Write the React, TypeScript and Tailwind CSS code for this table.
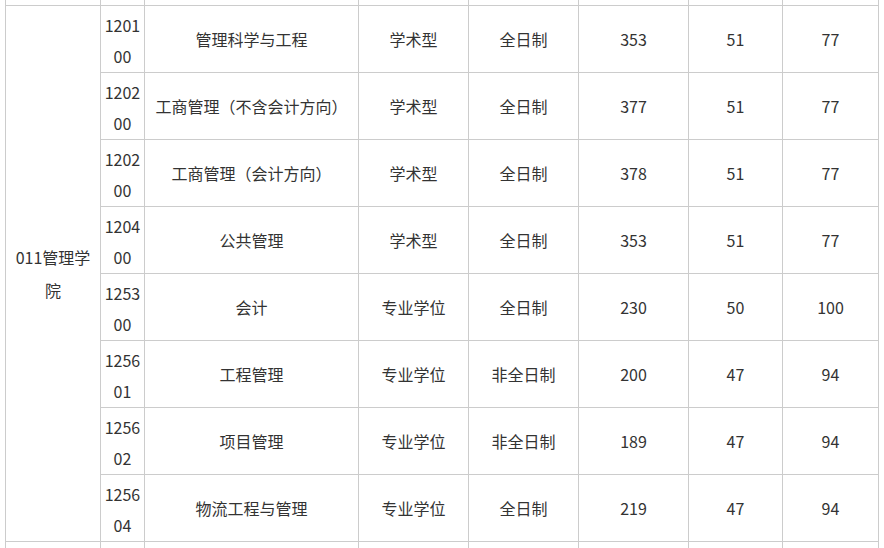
const rows = [
  ['120100', '管理科学与工程', '学术型', '全日制', '353', '51', '77'],
  ['120200', '工商管理（不含会计方向）', '学术型', '全日制', '377', '51', '77'],
  ['120200', '工商管理（会计方向）', '学术型', '全日制', '378', '51', '77'],
  ['120400', '公共管理', '学术型', '全日制', '353', '51', '77'],
  ['125300', '会计', '专业学位', '全日制', '230', '50', '100'],
  ['125601', '工程管理', '专业学位', '非全日制', '200', '47', '94'],
  ['125602', '项目管理', '专业学位', '非全日制', '189', '47', '94'],
  ['125604', '物流工程与管理', '专业学位', '全日制', '219', '47', '94'],
];

const cell = 'border border-[#cccccc] text-center align-middle';

export default function App() {
  return (
    <div
      className="h-[548px] w-[884px] overflow-hidden bg-white text-[16px] text-[#333333]"
      style={{ fontFamily: '"Microsoft YaHei", "Noto Sans CJK SC", sans-serif' }}
    >
      <table className="ml-[5px] mt-[-20px] w-[873px] table-fixed border-collapse">
        <colgroup>
          <col className="w-[95px]" />
          <col className="w-[44px]" />
          <col className="w-[214px]" />
          <col className="w-[110px]" />
          <col className="w-[110px]" />
          <col className="w-[110px]" />
          <col className="w-[94px]" />
          <col className="w-[96px]" />
        </colgroup>
        <tbody>
          <tr className="h-[25px]">
            {Array.from({ length: 8 }).map((_, i) => (
              <td key={i} className={cell}></td>
            ))}
          </tr>
          {rows.map((r, i) => (
            <tr key={i} className="h-[67px]">
              {i === 0 && (
                <td rowSpan={8} className={`${cell} px-2 leading-[33px]`}>
                  011管理学院
                </td>
              )}
              <td className={`${cell} break-all px-[3px] pt-[3px] leading-[31px]`}>{r[0]}</td>
              {r.slice(1).map((v, j) => (
                <td key={j} className={`${cell} px-1`}>
                  {v}
                </td>
              ))}
            </tr>
          ))}
          <tr className="h-[67px]">
            {Array.from({ length: 8 }).map((_, i) => (
              <td key={i} className={cell}></td>
            ))}
          </tr>
        </tbody>
      </table>
    </div>
  );
}
